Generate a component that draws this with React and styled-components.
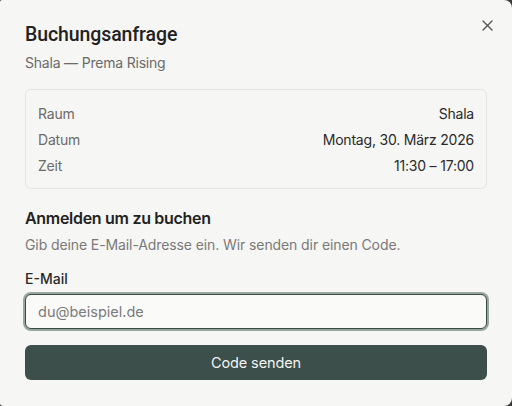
import React from "react";
import styled, { createGlobalStyle } from "styled-components";

const Global = createGlobalStyle`
  html, body { margin: 0; padding: 0; background: #3a3a3a; }
  body { font-family: Inter, "Noto Sans", "Liberation Sans", sans-serif; }
  * { box-sizing: border-box; }
`;

const Dialog = styled.div`
  position: relative;
  width: 512px;
  height: 406px;
  background: #f6f6f4;
  border-radius: 2px 8px 8px 3px;
  padding: 22px 25px 0 25px;
  display: flex;
  flex-direction: column;
  color: #262626;
`;

const Close = styled.button`
  position: absolute;
  top: 17px;
  right: 17px;
  width: 16px;
  height: 16px;
  border: none;
  background: none;
  padding: 0;
  display: flex;
  align-items: center;
  justify-content: center;
  color: #555;
  cursor: pointer;
`;

const Title = styled.h2`
  margin: 0;
  font-family: Roboto, Inter, sans-serif;
  font-size: 19.5px;
  line-height: 26px;
  font-weight: 500;
  letter-spacing: -0.1px;
  color: #222;
`;

const Subtitle = styled.p`
  margin: 5px 0 0;
  font-size: 14px;
  line-height: 20px;
  color: #6b6b6b;
  letter-spacing: -0.2px;
`;

const Card = styled.div`
  margin-top: 16px;
  border: 1px solid #e4e4e1;
  border-radius: 6px;
  padding: 14px 12px 12px;
  display: flex;
  flex-direction: column;
  gap: 6px;
`;

const Row = styled.div`
  display: flex;
  justify-content: space-between;
  font-size: 14px;
  line-height: 20px;
  letter-spacing: -0.2px;
`;

const Key = styled.span`
  color: #6b6b6b;
`;

const Val = styled.span`
  color: #2a2a2a;
`;

const SectionTitle = styled.h3`
  margin: 18px 0 0;
  font-size: 16px;
  line-height: 22px;
  font-weight: 600;
  letter-spacing: -0.3px;
  color: #222;
`;

const Help = styled.p`
  margin: 6px 0 0;
  font-size: 14px;
  line-height: 20px;
  color: #7a7a7a;
  letter-spacing: -0.1px;
`;

const Label = styled.label`
  margin-top: 14px;
  font-size: 14px;
  line-height: 20px;
  font-weight: 500;
  color: #2a2a2a;
`;

const Input = styled.input`
  margin-top: 5px;
  height: 35px;
  width: 100%;
  border: 1.5px solid #3a4a45;
  border-radius: 6px;
  box-shadow: 0 0 0 2px #98a5a1;
  background: #fafaf9;
  padding: 0 12px;
  font-family: inherit;
  font-size: 14.5px;
  color: #222;
  outline: none;
  &::placeholder { color: #7a7a7a; }
`;

const Button = styled.button`
  margin-top: 16px;
  height: 35px;
  width: 100%;
  border: none;
  border-radius: 6px;
  background: #3d4f4a;
  color: #f4f4f2;
  font-family: inherit;
  font-size: 14.5px;
  font-weight: 400;
  letter-spacing: -0.1px;
  cursor: pointer;
`;

export default function App() {
  return (
    <>
      <Global />
      <Dialog>
        <Close aria-label="Schließen">
          <svg width="11" height="11" viewBox="0 0 11 11" fill="none" stroke="currentColor" strokeWidth="1.4" strokeLinecap="round">
            <path d="M1 1L10 10M10 1L1 10" />
          </svg>
        </Close>
        <Title>Buchungsanfrage</Title>
        <Subtitle>Shala — Prema Rising</Subtitle>
        <Card>
          <Row><Key>Raum</Key><Val>Shala</Val></Row>
          <Row><Key>Datum</Key><Val>Montag, 30. März 2026</Val></Row>
          <Row><Key>Zeit</Key><Val>11:30 – 17:00</Val></Row>
        </Card>
        <SectionTitle>Anmelden um zu buchen</SectionTitle>
        <Help>Gib deine E-Mail-Adresse ein. Wir senden dir einen Code.</Help>
        <Label htmlFor="email">E-Mail</Label>
        <Input id="email" type="email" placeholder="du@beispiel.de" />
        <Button>Code senden</Button>
      </Dialog>
    </>
  );
}
